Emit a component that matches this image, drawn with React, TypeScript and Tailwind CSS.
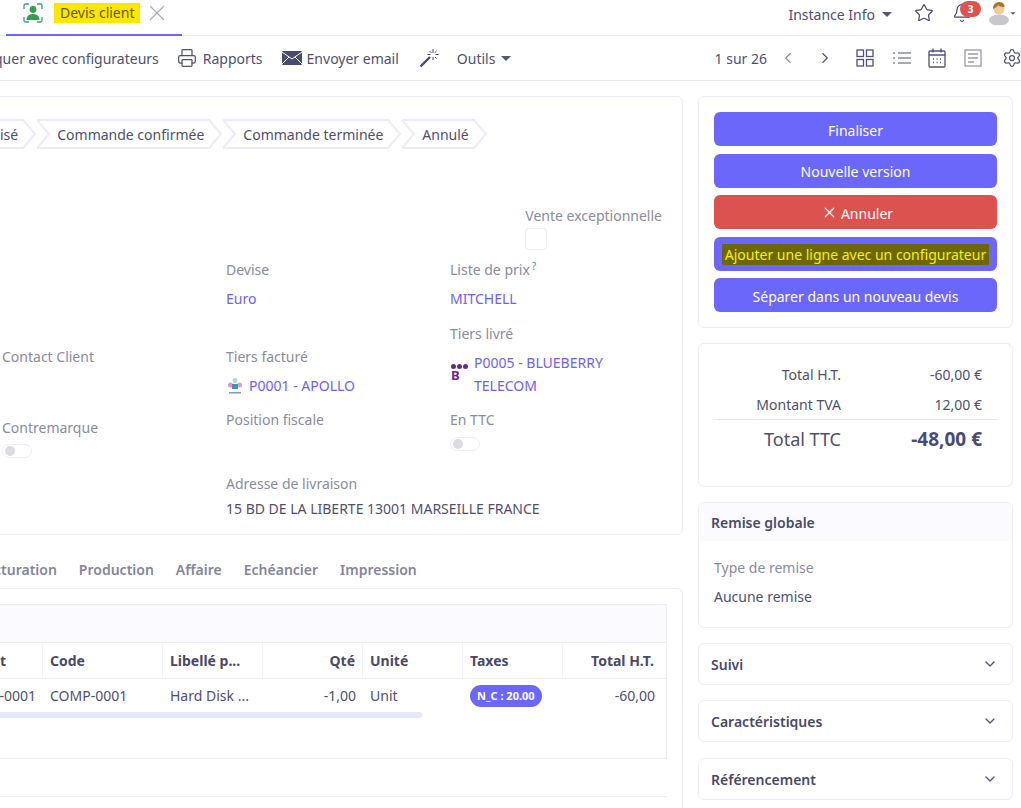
import { ChevronDown, ChevronLeft, ChevronRight, Printer, Settings, Star, Bell, X } from "lucide-react";

const Caret = ({ className = "" }: { className?: string }) => (
  <span className={`inline-block h-0 w-0 border-x-[5px] border-t-[5px] border-x-transparent border-t-[#55557a] ${className}`} />
);

const steps = ["isé", "Commande confirmée", "Commande terminée", "Annulé"];

function Step({ label, first }: { label: string; first?: boolean }) {
  return (
    <div className={`relative flex h-[30px] items-center border-y-2 border-[#ebebfa] bg-white pr-[6px] ${first ? "-ml-[2px] pl-0" : "-ml-[2px] pl-[20px]"}`}>
      {!first && (
        <svg className="absolute left-0 top-[-2px]" width="14" height="30" viewBox="0 0 14 30">
          <path d="M0 1 L12 15 L0 29" fill="none" stroke="#ebebfa" strokeWidth="2" />
        </svg>
      )}
      <span className="whitespace-nowrap">{label}</span>
      <svg className="absolute right-[-13px] top-[-2px] z-10" width="14" height="30" viewBox="0 0 14 30">
        <path d="M0 1 L12 15 L0 29" fill="white" stroke="#ebebfa" strokeWidth="2" />
      </svg>
    </div>
  );
}

function Field({ label, children, className = "" }: { label: React.ReactNode; children?: React.ReactNode; className?: string }) {
  return (
    <div className={className}>
      <div className="text-[#8b8b9b]">{label}</div>
      {children}
    </div>
  );
}

const Toggle = () => (
  <div className="flex h-[14px] w-[30px] items-center rounded-full border border-[#ececf8] pl-[2px]">
    <span className="h-[10px] w-[10px] rounded-full bg-[#dcdce0]" />
  </div>
);

function Accordion({ label, className = "" }: { label: string; className?: string }) {
  return (
    <div className={`flex h-[42px] shrink-0 items-center justify-between rounded-[6px] border border-[#ebebfa] pl-3 pr-[14px] ${className}`}>
      <span className="font-semibold text-[#4a4a68]">{label}</span>
      <ChevronDown size={16} className="text-[#55557a]" />
    </div>
  );
}

const cols = [
  { label: "t", w: "w-[43px]", value: "-0001", cls: "justify-end pr-[7px]" },
  { label: "Code", w: "w-[120px]", value: "COMP-0001", cls: "pl-[7px]" },
  { label: "Libellé p...", w: "w-[100px]", value: "Hard Disk ...", cls: "pl-[7px]" },
  { label: "Qté", w: "w-[100px]", value: "-1,00", cls: "justify-end pr-[7px]" },
  { label: "Unité", w: "w-[100px]", value: "Unit", cls: "pl-[7px]" },
  { label: "Taxes", w: "w-[100px]", value: "", cls: "pl-[7px]" },
  { label: "Total H.T.", w: "w-[104px]", value: "-60,00", cls: "justify-end pr-[12px]" },
];

export default function App() {
  return (
    <div className="h-[808px] w-[1021px] overflow-hidden bg-white font-['Noto_Sans',sans-serif] text-[14px] text-[#50506e]">
      {/* tab bar */}
      <div className="flex h-[36px] items-start justify-between border-b border-[#e8e8fa] pr-[3px]">
        <div className="ml-[6px] flex h-[36px] w-[176px] items-start border-b-2 border-[#6c67fb] pl-[17px] pt-[3px]">
          <svg width="20" height="20" viewBox="0 0 20 20" fill="none">
            <path d="M1 6V2.5A1.5 1.5 0 0 1 2.500 1H6M14 1h3.500A1.500 1.500 0 0 1 19 2.500V6M1 14v3.500A1.500 1.500 0 0 0 2.500 19H6M14 19h3.500a1.500 1.500 0 0 0 1.500-1.500V14" stroke="#3a9a8a" strokeWidth="1.300" />
            <circle cx="10" cy="6.500" r="3.400" fill="#2f9e4f" />
            <path d="M3.500 17c0-4 3-6 6.500-6s6.500 2 6.500 6z" fill="#2f9e4f" />
          </svg>
          <span className="ml-[11px] bg-[#ffe600] px-[6px] text-[14px] leading-[20px] text-[#5f5a00]">Devis client</span>
          <X size={26} strokeWidth={1.100} className="ml-[4px] mt-[-3px] text-[#aaaab8]" />
        </div>
        <div className="flex items-center pt-[1px]">
          <span className="mt-[2px]">Instance Info</span>
          <Caret className="ml-[7px] mt-[2px]" />
          <Star size={20} strokeWidth={1.500} className="ml-[22px] text-[#4a4a70]" />
          <div className="relative ml-[18px] h-[20px] w-[20px]">
            <Bell size={20} strokeWidth={1.500} className="text-[#4a4a70]" />
            <span className="absolute left-[8px] top-[-2px] flex h-[16px] w-[21px] items-center justify-center rounded-full bg-[#dc524f] text-[10px] font-bold text-white">3</span>
          </div>
          <svg className="ml-[17px]" width="20" height="24" viewBox="0 0 20 24">
            <ellipse cx="10" cy="19" rx="10" ry="5.500" fill="#c8c8cc" />
            <circle cx="10" cy="8" r="5.500" fill="#f0c8a0" />
            <path d="M4 8c0-5 3-7 6.500-7S16 4 15.500 6C13 6 10 5.500 9 4 8 6 6 7 4 8z" fill="#a5772f" />
          </svg>
          <Caret className="ml-[-1px] scale-50" />
        </div>
      </div>

      {/* toolbar */}
      <div className="flex h-[45px] items-center justify-between border-b border-[#e8e8fa]">
        <div className="flex items-center">
          <span className="-ml-[6px] whitespace-nowrap">quer avec configurateurs</span>
          <Printer size={20} strokeWidth={1.500} className="ml-[18px] text-[#50507a]" />
          <span className="ml-[6px]">Rapports</span>
          <svg className="ml-[19px]" width="20" height="14" viewBox="0 0 20 14">
            <rect width="20" height="14" rx="1" fill="#4a4a70" />
            <path d="M0 1 L10 8 L20 1 M0 13 L7 6 M20 13 L13 6" stroke="white" strokeWidth="1" fill="none" />
          </svg>
          <span className="ml-[5px]">Envoyer email</span>
          <svg className="ml-[20px]" width="20" height="20" viewBox="0 0 20 20" fill="none">
            <path d="M1.500 18.500 L11 9" stroke="#4a4a70" strokeWidth="2.400" />
            <path d="M14 1v4M14 9v3M8.500 6.500h3M16.500 6.500h3M10.500 3l1.800 1.800M17.500 3l-1.800 1.800M16 9l1.600 1.600" stroke="#4a4a70" strokeWidth="1" />
          </svg>
          <span className="ml-[18px]">Outils</span>
          <Caret className="ml-[6px]" />
        </div>
        <div className="flex items-center">
          <span>1 sur 26</span>
          <ChevronLeft size={18} strokeWidth={1.500} className="ml-[12px] text-[#8b8b9b]" />
          <ChevronRight size={18} strokeWidth={1.500} className="ml-[19px] text-[#50507a]" />
          <svg className="ml-[22px]" width="18" height="18" viewBox="0 0 18 18" fill="none" stroke="#50507a" strokeWidth="1.300">
            <rect x="1" y="1" width="6.500" height="6.500" />
            <rect x="10.500" y="1" width="6.500" height="6.500" />
            <rect x="1" y="10.500" width="6.500" height="6.500" />
            <rect x="10.500" y="10.500" width="6.500" height="6.500" />
          </svg>
          <svg className="ml-[19px]" width="18" height="14" viewBox="0 0 18 14" fill="none" stroke="#50507a" strokeWidth="1.200">
            <path d="M5 2h13M5 7h13M5 12h13M0 2h2M0 7h2M0 12h2" />
          </svg>
          <svg className="ml-[17px]" width="18" height="20" viewBox="0 0 18 20" fill="none" stroke="#50507a" strokeWidth="1.300">
            <rect x="1" y="3" width="16" height="16" rx="1" />
            <path d="M1 7h16M5 0.500v4M13 0.500v4" />
            <path d="M5 11h1M8.500 11h1M12 11h1M5 14.500h1M8.500 14.500h1M12 14.500h1" />
          </svg>
          <svg className="ml-[18px]" width="18" height="18" viewBox="0 0 18 18" fill="none" stroke="#9a9aae" strokeWidth="1.300">
            <rect x="1" y="1" width="16" height="16" />
            <path d="M4 5h10M4 9h10M4 13h6" />
          </svg>
          <Settings size={20} strokeWidth={1.500} className="ml-[20px] mr-[-1px] text-[#50507a]" />
        </div>
      </div>

      {/* body */}
      <div className="flex gap-[15px] pr-[8px] pt-[15px]">
        <div className="w-[683px] shrink-0">
          <div className="-ml-[10px] h-[439px] w-[693px] rounded-[6px] border border-[#ebebfa] pl-[11px] pt-[22px]">
            <div className="flex">
              {steps.map((s, i) => (
                <div key={s} className="mr-[15px]">
                  <Step label={s} first={i === 0} />
                </div>
              ))}
            </div>
            <div className="mr-[20px] mt-[56px] flex flex-col items-end">
              <span className="text-[#8b8b9b]">Vente exceptionnelle</span>
              <span className="mr-[115px] mt-[2px] h-[22px] w-[22px] rounded-[4px] border border-[#ececf8]" />
            </div>
            <div className="mt-[9px] flex">
              <div className="w-[224px] pt-[87px]">
                <Field label="Contact Client" />
                <Field label="Contremarque" className="mt-[50px]">
                  <div className="mt-[6px]"><Toggle /></div>
                </Field>
              </div>
              <div className="w-[224px]">
                <Field label="Devise">
                  <div className="mt-[8px] text-[#6c63f5]">Euro</div>
                </Field>
                <Field label="Tiers facturé" className="mt-[37px]">
                  <div className="mt-[8px] flex items-center text-[#6c63f5]">
                    <svg className="mr-[5px]" width="18" height="18" viewBox="0 0 18 18">
                      <circle cx="9" cy="3.500" r="2.500" fill="#b8d8c8" />
                      <circle cx="4.500" cy="8" r="2.500" fill="#e890c8" />
                      <circle cx="13.500" cy="8" r="2.500" fill="#d8a0d8" />
                      <rect x="6" y="7" width="6" height="5" fill="#4a90b0" />
                      <rect x="3" y="15" width="12" height="1.500" fill="#7a9ac8" />
                    </svg>
                    P0001 - APOLLO
                  </div>
                </Field>
                <Field label="Position fiscale" className="mt-[13px]" />
                <Field label="Adresse de livraison" className="mt-[43px]">
                  <div className="mt-[4px] whitespace-nowrap">15 BD DE LA LIBERTE 13001 MARSEILLE FRANCE</div>
                </Field>
              </div>
              <div className="w-[220px]">
                <Field label={<>Liste de prix<sup className="ml-[2px] text-[10px] leading-none text-[#2fa08a]">?</sup></>}>
                  <div className="mt-[8px] text-[#6c63f5]">MITCHELL</div>
                </Field>
                <Field label="Tiers livré" className="mt-[14px]">
                  <div className="mt-[7px] flex text-[#6c63f5]">
                    <div className="ml-px mr-[3px] mt-[13px] flex w-[20px] flex-col text-[#6a2a8a]">
                      <div className="flex gap-[1px]">
                        <span className="h-[5px] w-[5px] rounded-full bg-[#6a2a8a]" />
                        <span className="h-[5px] w-[5px] rounded-full bg-[#6a2a8a]" />
                        <span className="h-[5px] w-[5px] rounded-full bg-[#6a2a8a]" />
                      </div>
                      <div className="flex items-end">
                        <span className="text-[13px] font-bold leading-[12px]">B</span>
                      </div>
                    </div>
                    <div className="leading-[23px]">P0005 - BLUEBERRY<br />TELECOM</div>
                  </div>
                </Field>
                <Field label="En TTC" className="mt-[12px]">
                  <div className="mt-[7px]"><Toggle /></div>
                </Field>
              </div>
            </div>
          </div>

          <div className="-ml-[6px] flex gap-[22px] pt-[24px] font-semibold text-[#85859a]">
            <span>cturation</span>
            <span>Production</span>
            <span>Affaire</span>
            <span>Echéancier</span>
            <span>Impression</span>
          </div>

          <div className="-ml-[10px] mt-[8px] h-[260px] w-[693px] rounded-[6px] border border-[#ebebfa] pl-[9px] pt-[15px]">
            <div className="h-[155px] w-[667px] overflow-hidden border border-l-0 border-[#ebebfa]">
              <div className="h-[38px] border-b border-[#ebebfa] bg-[#fafaff]" />
              <div className="flex h-[36px] border-b border-[#ebebfa] font-bold text-[#4a4a68]">
                {cols.map((c, i) => (
                  <div key={c.label} className={`flex shrink-0 items-center border-r border-[#f2f2fa] ${c.w} ${i === 0 ? "pl-0" : c.cls}`}>{c.label}</div>
                ))}
              </div>
              <div className="flex h-[33px]">
                {cols.map((c) => (
                  <div key={c.label} className={`flex shrink-0 items-center ${c.w} ${c.cls}`}>
                    {c.label === "Taxes" ? (
                      <span className="rounded-full bg-[#6c67fb] px-[7px] text-[11px] font-bold leading-[22px] text-white">N_C : 20.00</span>
                    ) : c.value}
                  </div>
                ))}
              </div>
              <div className="h-[6px] w-[422px] rounded-r-full bg-[#e7e7fa]" />
            </div>
            <div className="mt-[37px] w-[667px] border-t border-[#ebebfa]" />
          </div>
        </div>

        {/* right column */}
        <div className="flex min-w-0 flex-1 flex-col gap-[15px]">
          <div className="flex flex-col gap-[7.500px] rounded-[6px] border border-[#ebebfa] p-[15px] text-white">
            <div className="flex h-[34px] items-center justify-center rounded-[6px] bg-[#6c67fb] pt-[2px]">Finaliser</div>
            <div className="flex h-[34px] items-center justify-center rounded-[6px] bg-[#6c67fb] pt-[2px]">Nouvelle version</div>
            <div className="flex h-[34px] items-center justify-center rounded-[6px] bg-[#dc524f] pl-[3px] pt-[2px]">
              <X size={17} strokeWidth={1.800} className="mr-[3px] -mt-[2px]" />
              Annuler
            </div>
            <div className="flex h-[34px] items-center justify-center rounded-[6px] bg-[#6c67fb] pt-[2px]">
              <span className="whitespace-nowrap bg-[#6e6600] px-[3px] text-[#f5f500]">Ajouter une ligne avec un configurateur</span>
            </div>
            <div className="flex h-[34px] items-center justify-center rounded-[6px] bg-[#6c67fb] pt-[2px]">Séparer dans un nouveau devis</div>
          </div>

          <div className="h-[144px] rounded-[6px] border border-[#ebebfa] px-[14px] pt-[20px]">
            <div className="flex justify-between pr-[16px]">
              <div className="w-[128px] text-right">Total H.T.</div>
              <span>-60,00 €</span>
            </div>
            <div className="mt-[9px] flex justify-between border-b border-[#e4e4ee] pb-[4px] pr-[16px]">
              <div className="w-[128px] text-right">Montant TVA</div>
              <span>12,00 €</span>
            </div>
            <div className="flex items-center justify-between pr-[16px] pt-[5px] text-[18px]">
              <div className="w-[128px] text-right">Total TTC</div>
              <span className="text-[19px] font-bold text-[#4a4a78]">-48,00 €</span>
            </div>
          </div>

          <div className="h-[126px] overflow-hidden rounded-[6px] border border-[#ebebfa]">
            <div className="flex h-[38px] items-center bg-[#fafaff] pl-3 font-semibold text-[#4a4a68]">Remise globale</div>
            <div className="pl-[15px] pt-[16px] text-[#8b8b9b]">Type de remise</div>
            <div className="pl-[15px] pt-[8px]">Aucune remise</div>
          </div>

          <Accordion label="Suivi" />
          <Accordion label="Caractéristiques" />
          <Accordion label="Référencement" className="mt-px" />
        </div>
      </div>
    </div>
  );
}
